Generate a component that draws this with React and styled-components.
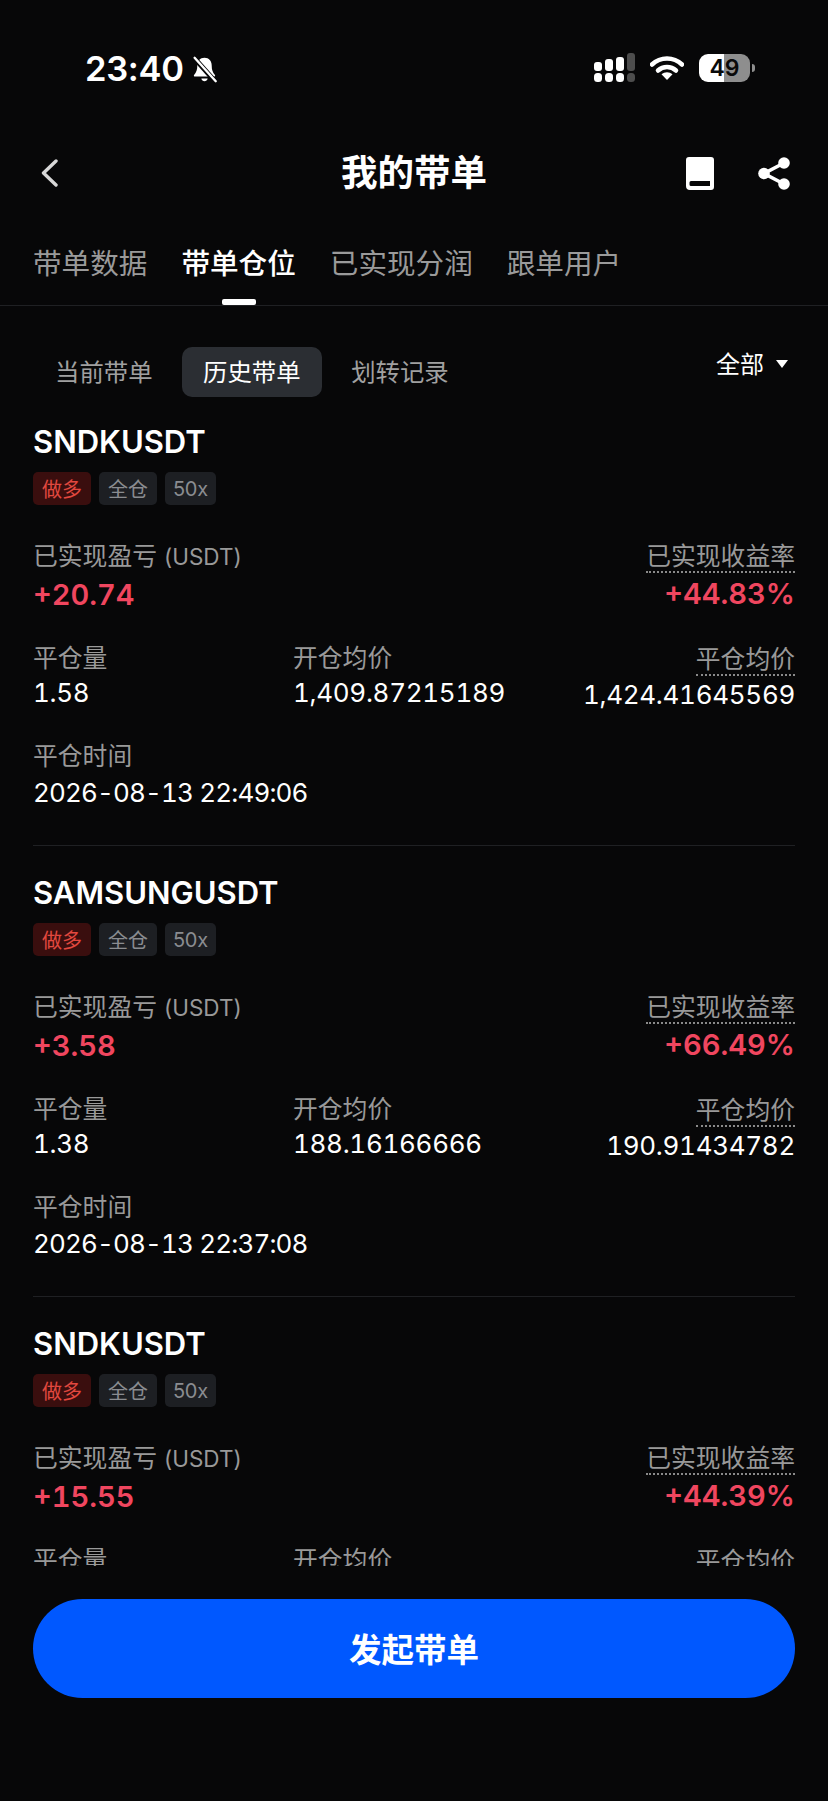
import React from "react";
import styled, { createGlobalStyle } from "styled-components";

const CJK = `Inter, "Noto Sans CJK SC", "Noto Sans", sans-serif`;
const BG = "#070708";

const Global = createGlobalStyle`
  html, body { margin: 0; padding: 0; background: ${BG}; }
  * { box-sizing: border-box; }
`;

const Page = styled.div`
  width: 828px;
  height: 1801px;
  overflow: hidden;
  display: flex;
  flex-direction: column;
  background: ${BG};
  color: #fff;
  font-family: ${CJK};
`;

const StatusBar = styled.div`
  height: 139px;
  padding: 52px 73px 0 85px;
  display: flex;
  align-items: flex-start;
  justify-content: space-between;
`;
const TimeGroup = styled.div`
  display: flex;
  align-items: center;
  gap: 7px;
  height: 32px;
  margin-top: 1px;
`;
const Time = styled.span`
  font-size: 34.5px;
  font-weight: 600;
  line-height: 36px;
  letter-spacing: -0.3px;
`;
const StatusIcons = styled.div`
  display: flex;
  align-items: center;
  gap: 15px;
  height: 29px;
  margin-top: 1px;
`;
const Battery = styled.div`
  width: 51px;
  height: 28px;
  border-radius: 9px;
  margin-right: 5px;
  position: relative;
  background: linear-gradient(90deg, #fff 0 49%, #8e8e8e 49% 100%);
  display: flex;
  align-items: center;
  justify-content: center;
  color: #0a0a0a;
  font-size: 23px;
  font-weight: 600;
  &::after {
    content: "";
    position: absolute;
    right: -5px;
    top: 10px;
    width: 3px;
    height: 8px;
    border-radius: 0 3px 3px 0;
    background: #8e8e8e;
  }
`;

const Nav = styled.div`
  height: 68px;
  padding: 0 38px 0 41px;
  display: flex;
  align-items: center;
  position: relative;
`;
const NavTitle = styled.h1`
  position: absolute;
  left: 0;
  right: 0;
  margin: 0;
  text-align: center;
  font-size: 36.5px;
  font-weight: 700;
  line-height: 50px;
`;
const NavActions = styled.div`
  margin-left: auto;
  display: flex;
  align-items: center;
  gap: 44px;
`;

const Tabs = styled.div`
  display: flex;
  gap: 34px;
  padding: 37px 33px 0;
  border-bottom: 1px solid #1f2023;
`;
const Tab = styled.div`
  display: flex;
  flex-direction: column;
  align-items: center;
  font-size: 28.6px;
  line-height: 40px;
  font-weight: ${(p) => (p.$active ? 500 : 400)};
  color: ${(p) => (p.$active ? "#fff" : "#9a9a9a")};
`;
const TabBar = styled.span`
  width: 34px;
  height: 6px;
  margin-top: 15px;
  border-radius: 2px;
  background: ${(p) => (p.$active ? "#fff" : "transparent")};
`;

const SubRow = styled.div`
  display: flex;
  align-items: flex-start;
  gap: 7.5px;
  padding: 41px 33px 26px 33px;
`;
const SubTab = styled.div`
  height: 50px;
  padding: 0 ${(p) => (p.$active ? 21 : 22)}px 3px;
  display: flex;
  align-items: center;
  border-radius: 10px;
  font-size: 24.4px;
  color: ${(p) => (p.$active ? "#fff" : "#a0a0a0")};
  background: ${(p) => (p.$active ? "#2b2e33" : "transparent")};
`;
const Filter = styled.div`
  margin-left: auto;
  display: flex;
  align-items: center;
  gap: 12px;
  height: 31px;
  font-size: 24px;
  margin-right: 7px;
`;
const Caret = styled.span`
  width: 0;
  height: 0;
  margin-top: 3px;
  border-left: 6px solid transparent;
  border-right: 6px solid transparent;
  border-top: 8px solid #fff;
`;

const List = styled.div`
  height: 1143px;
  overflow: hidden;
  flex: none;
`;
const Card = styled.section`
  margin: 0 33px;
  padding-bottom: 35px;
  margin-bottom: 28px;
  border-bottom: 1px solid #1f2023;
`;
const Symbol = styled.div`
  font-size: 31px;
  font-weight: 600;
  line-height: 38px;
`;
const TagRow = styled.div`
  display: flex;
  gap: 8px;
  margin-top: 11px;
`;
const Tag = styled.span`
  height: 33px;
  padding: 0 ${(p) => (p.$tight ? 8 : 9)}px;
  display: flex;
  align-items: center;
  border-radius: 5px;
  font-size: 20px;
  letter-spacing: ${(p) => (p.$tight ? "-0.3px" : "0")};
  color: ${(p) => (p.$long ? "#e2483f" : "#8a8c90")};
  background: ${(p) => (p.$long ? "#3a0e0e" : "#1d1f23")};
`;
const PnlRow = styled.div`
  display: flex;
  justify-content: space-between;
  margin-top: 34px;
`;
const Col = styled.div`
  display: flex;
  flex-direction: column;
  align-items: ${(p) => (p.$right ? "flex-end" : "flex-start")};
`;
const Label = styled.span`
  font-size: 24.8px;
  line-height: 34px;
  color: #999;
`;
const Unit = styled.span`
  font-size: 22.5px;
`;
const DottedLabel = styled(Label)`
  border-bottom: 2px dotted #8a8a8a;
  line-height: 30px;
  padding-top: 2px;
`;
const Pnl = styled.span`
  font-size: 29px;
  font-weight: 600;
  line-height: 36px;
  margin-top: 3px;
  color: #f0465f;
  font-variant-numeric: tabular-nums;
`;
const Grid = styled.div`
  display: grid;
  grid-template-columns: 260px 1fr auto;
  margin-top: 28px;
`;
const RightCol = styled(Col)`
  margin-top: 1px;
`;
const Value = styled.span`
  font-size: 26px;
  line-height: 34px;
  color: #fff;
  font-variant-numeric: tabular-nums;
  letter-spacing: -0.3px;
  margin-top: ${(p) => p.$push}px;
`;
const Stamp = styled.span`
  font-size: 26px;
  line-height: 34px;
  color: #fff;
  font-variant-numeric: tabular-nums;
  letter-spacing: -0.85px;
`;
const TimeBlock = styled.div`
  margin-top: 27px;
  display: flex;
  flex-direction: column;
  gap: 3px;
`;

const Footer = styled.div`
  padding: 33px 33px 0;
`;
const Action = styled.button`
  width: 100%;
  height: 99px;
  border: 0;
  border-radius: 50px;
  background: #0058ff;
  color: #fff;
  font-family: ${CJK};
  font-size: 32.5px;
  font-weight: 700;
  padding: 0 0 2px;
`;

const Bell = () => (
  <svg width="27" height="29" viewBox="0 0 30 30" fill="none">
    <path d="M15 2c-5 0-8 3.600-8 8.600 0 5-1 7.400-3.600 10.400-.6.800 0 1.800 1 1.800h21.200c1 0 1.600-1 1-1.800C24 18 23 15.600 23 10.600 23 5.600 20 2 15 2Z" fill="#fff" />
    <path d="M11.500 25h7c-.4 2-1.800 3-3.500 3s-3.100-1-3.500-3Z" fill="#fff" />
    <path d="M3 1.500 27 28.500" stroke={BG} strokeWidth="5.500" />
    <path d="M4 2 27.500 28" stroke="#fff" strokeWidth="2.600" strokeLinecap="round" />
  </svg>
);

const Signal = () => (
  <svg width="41" height="29" viewBox="0 0 41 29">
    <g fill="#fff">
      <rect x="0" y="9" width="8" height="9" rx="3" />
      <rect x="11" y="6" width="8" height="12" rx="3" />
      <rect x="22" y="4" width="8" height="14" rx="3" />
      <rect x="0" y="20" width="8" height="9" rx="3.500" />
      <rect x="11" y="20" width="8" height="9" rx="3.500" />
      <rect x="22" y="20" width="8" height="9" rx="3.500" />
    </g>
    <g fill="#4d4d4d">
      <rect x="33" y="0" width="8" height="18" rx="3" />
      <rect x="33" y="20" width="8" height="9" rx="3.500" />
    </g>
  </svg>
);

const Wifi = () => (
  <svg width="34" height="25" viewBox="0 0 34 25" fill="none" stroke="#fff">
    <path d="M2 9.500C10.500 1.500 23.500 1.500 32 9.500" strokeWidth="4.500" strokeLinecap="round" />
    <path d="M8 15.500c5-4.700 13-4.700 18 0" strokeWidth="4.500" strokeLinecap="round" />
    <path d="M17 25l-5.500-5.700c3-2.700 8-2.700 11 0L17 25Z" fill="#fff" stroke="none" />
  </svg>
);

const Back = () => (
  <svg width="18" height="28" viewBox="0 0 18 28" fill="none">
    <path d="M15 2 2.500 14 15 26" stroke="#d8d8d8" strokeWidth="3.400" strokeLinecap="round" strokeLinejoin="round" />
  </svg>
);

const Book = () => (
  <svg width="28" height="33" viewBox="0 0 28 33">
    <path fillRule="evenodd" d="M3 0h22a3 3 0 0 1 3 3v27a3 3 0 0 1-3 3H4a4 4 0 0 1-4-4V3a3 3 0 0 1 3-3Zm2 24a1.500 1.500 0 0 0-1.500 1.500v2A1.500 1.500 0 0 0 5 29h19v-5H5Z" fill="#fff" />
  </svg>
);

const Share = () => (
  <svg width="32" height="33" viewBox="0 0 32 33" fill="none">
    <path d="M26 6 6 16.500 26 27" stroke="#fff" strokeWidth="3.600" />
    <circle cx="26" cy="6" r="5.800" fill="#fff" />
    <circle cx="6" cy="16.500" r="5.800" fill="#fff" />
    <circle cx="26" cy="27" r="5.800" fill="#fff" />
  </svg>
);

const orders = [
  { symbol: "SNDKUSDT", pnl: "+20.74", rate: "+44.83%", qty: "1.58", open: "1,409.87215189", close: "1,424.41645569", time: "2026-08-13 22:49:06" },
  { symbol: "SAMSUNGUSDT", pnl: "+3.58", rate: "+66.49%", qty: "1.38", open: "188.16166666", close: "190.91434782", time: "2026-08-13 22:37:08" },
  { symbol: "SNDKUSDT", pnl: "+15.55", rate: "+44.39%", qty: "1.11", open: "1,409.87215189", close: "1,424.41645569", time: "2026-08-13 22:30:00" },
];

const tabs = ["带单数据", "带单仓位", "已实现分润", "跟单用户"];
const subTabs = ["当前带单", "历史带单", "划转记录"];

export default function App() {
  return (
    <Page>
      <Global />
      <StatusBar>
        <TimeGroup>
          <Time>23:40</Time>
          <Bell />
        </TimeGroup>
        <StatusIcons>
          <Signal />
          <Wifi />
          <Battery>49</Battery>
        </StatusIcons>
      </StatusBar>
      <Nav>
        <Back />
        <NavTitle>我的带单</NavTitle>
        <NavActions>
          <Book />
          <Share />
        </NavActions>
      </Nav>
      <Tabs>
        {tabs.map((t) => (
          <Tab key={t} $active={t === "带单仓位"}>
            {t}
            <TabBar $active={t === "带单仓位"} />
          </Tab>
        ))}
      </Tabs>
      <SubRow>
        {subTabs.map((t) => (
          <SubTab key={t} $active={t === "历史带单"}>
            {t}
          </SubTab>
        ))}
        <Filter>
          全部
          <Caret />
        </Filter>
      </SubRow>
      <List>
        {orders.map((o, i) => (
          <Card key={i}>
            <Symbol>{o.symbol}</Symbol>
            <TagRow>
              <Tag $long>做多</Tag>
              <Tag>全仓</Tag>
              <Tag $tight>50x</Tag>
            </TagRow>
            <PnlRow>
              <Col>
                <Label>已实现盈亏 <Unit>(USDT)</Unit></Label>
                <Pnl>{o.pnl}</Pnl>
              </Col>
              <Col $right>
                <DottedLabel>已实现收益率</DottedLabel>
                <Pnl>{o.rate}</Pnl>
              </Col>
            </PnlRow>
            <Grid>
              <Col>
                <Label>平仓量</Label>
                <Value $push={1}>{o.qty}</Value>
              </Col>
              <Col>
                <Label>开仓均价</Label>
                <Value $push={1}>{o.open}</Value>
              </Col>
              <RightCol $right>
                <DottedLabel>平仓均价</DottedLabel>
                <Value $push={2}>{o.close}</Value>
              </RightCol>
            </Grid>
            <TimeBlock>
              <Label>平仓时间</Label>
              <Stamp>{o.time}</Stamp>
            </TimeBlock>
          </Card>
        ))}
      </List>
      <Footer>
        <Action>发起带单</Action>
      </Footer>
    </Page>
  );
}
